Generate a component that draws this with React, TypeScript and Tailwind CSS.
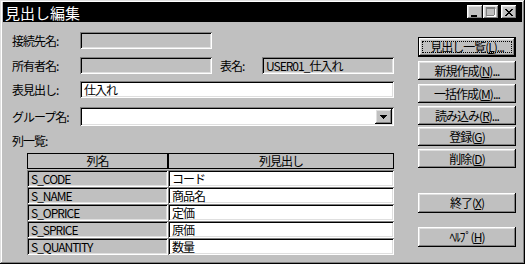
import React from "react";

const RAISED =
  "shadow-[inset_-1px_-1px_#000000,inset_1px_1px_#ffffff,inset_-2px_-2px_#808080,inset_2px_2px_#dfdfdf]";
const SUNKEN =
  "shadow-[inset_1px_1px_#808080,inset_-1px_-1px_#ffffff,inset_2px_2px_#000000,inset_-2px_-2px_#dfdfdf]";

function PixelIcon({ rows, color = "#000" }: { rows: string[]; color?: string }) {
  const rects: React.ReactNode[] = [];
  rows.forEach((r, y) =>
    [...r].forEach((c, x) => {
      if (c === "x")
        rects.push(<rect key={`${x}-${y}`} x={x} y={y} width={1} height={1} fill={color} />);
      if (c === "g")
        rects.push(<rect key={`${x}-${y}`} x={x} y={y} width={1} height={1} fill="#808080" />);
      if (c === "w")
        rects.push(<rect key={`${x}-${y}`} x={x} y={y} width={1} height={1} fill="#ffffff" />);
    })
  );
  return (
    <svg width={rows[0].length} height={rows.length} shapeRendering="crispEdges">
      {rects}
    </svg>
  );
}

const CLOSE_X = [
  "xx....xx",
  ".xx..xx.",
  "..xxxx..",
  "...xx...",
  "..xxxx..",
  ".xx..xx.",
  "xx....xx",
];

const MAX_BOX = [
  "ggggggggg.",
  "ggggggggg.",
  "g.......gw",
  "g.......gw",
  "g.......gw",
  "g.......gw",
  "g.......gw",
  "g.......gw",
  "ggggggggww",
  ".wwwwwwwww",
];

const TRI = ["xxxxxxx", ".xxxxx.", "..xxx..", "...x..."];

function TitleBtn({ children, className = "" }: { children?: React.ReactNode; className?: string }) {
  return (
    <div
      className={`w-[16px] h-[14px] bg-[#c0c0c0] flex items-center justify-center ${RAISED} ${className}`}
    >
      {children}
    </div>
  );
}

function Label({ children, w }: { children: React.ReactNode; w: string }) {
  return <div className={`${w} shrink-0 flex items-center h-full`}>{children}</div>;
}

function Field({
  w,
  white,
  children,
}: {
  w: string;
  white?: boolean;
  children?: React.ReactNode;
}) {
  return (
    <div
      className={`${w} h-full shrink-0 flex items-center pl-[4px] ${
        white ? "bg-white" : "bg-[#c0c0c0]"
      } ${SUNKEN}`}
    >
      {children}
    </div>
  );
}

function Btn({
  children,
  className = "",
  isDefault,
}: {
  children: React.ReactNode;
  className?: string;
  isDefault?: boolean;
}) {
  if (isDefault) {
    return (
      <div className={`w-[98px] border border-black bg-[#c0c0c0] ${className}`}>
        <div className={`w-full h-full p-[3px] ${RAISED}`}>
          <div className="w-full h-full border border-dotted border-black flex items-center justify-center">
            {children}
          </div>
        </div>
      </div>
    );
  }
  return (
    <div
      className={`w-[98px] bg-[#c0c0c0] flex items-center justify-center ${RAISED} ${className}`}
    >
      {children}
    </div>
  );
}

const U = ({ c }: { c: string }) => <span className="underline underline-offset-[1px]">{c}</span>;

const rows = [
  ["S_CODE", "コード"],
  ["S_NAME", "商品名"],
  ["S_OPRICE", "定価"],
  ["S_SPRICE", "原価"],
  ["S_QUANTITY", "数量"],
];

export default function App() {
  return (
    <div
      className={`w-[525px] h-[264px] overflow-hidden bg-[#c0c0c0] p-[2px] text-[12px] leading-none tracking-[-1px] text-black font-['Noto_Sans_CJK_JP','Noto_Sans',sans-serif] shadow-[inset_-1px_-1px_#000000,inset_1px_1px_#dfdfdf,inset_-2px_-2px_#808080,inset_2px_2px_#ffffff]`}
    >
      {/* Title bar */}
      <div className="h-[20px] mx-[1px] bg-black flex items-center justify-between pl-[2px] pr-[5px]">
        <span className="text-white text-[15px] leading-none tracking-normal">見出し編集</span>
        <div className="flex items-center">
          <TitleBtn>
            <div className="w-[6px] h-[2px] bg-black mt-[7px] mr-[2px]" />
          </TitleBtn>
          <TitleBtn>
            <PixelIcon rows={MAX_BOX} />
          </TitleBtn>
          <TitleBtn className="ml-[2px]">
            <PixelIcon rows={CLOSE_X} />
          </TitleBtn>
        </div>
      </div>

      {/* Body */}
      <div className="flex">
        {/* Left */}
        <div className="w-[414px] pl-[10px] flex flex-col">
          <div className="flex h-[17px] mt-[10px]">
            <Label w="w-[68px]">接続先名:</Label>
            <Field w="w-[132px]" />
          </div>
          <div className="flex h-[17px] mt-[8px]">
            <Label w="w-[68px]">所有者名:</Label>
            <Field w="w-[132px]" />
            <Label w="w-[50px] pl-[8px]">表名:</Label>
            <Field w="w-[132px]">USER01_仕入れ</Field>
          </div>
          <div className="flex h-[17px] mt-[7px]">
            <Label w="w-[68px]">表見出し:</Label>
            <Field w="w-[314px]" white>
              仕入れ
            </Field>
          </div>
          <div className="flex h-[19px] mt-[9px]">
            <Label w="w-[68px]">グループ名:</Label>
            <div
              className={`w-[314px] h-full bg-white flex items-center justify-end pr-[2px] ${SUNKEN}`}
            >
              <div className={`w-[17px] h-[15px] bg-[#c0c0c0] flex items-center justify-center ${RAISED}`}>
                <PixelIcon rows={TRI} />
              </div>
            </div>
          </div>
          <div className="h-[13px] mt-[8px] flex items-center">列一覧:</div>
          <div className="ml-[15px] mt-[6px] w-[367px] flex flex-col">
            <div className="flex h-[16px] mb-[1px]">
              <div className="w-[141px] h-full border border-black flex items-center justify-center">
                列名
              </div>
              <div className="w-[226px] h-full border border-black flex items-center justify-center">
                列見出し
              </div>
            </div>
            {rows.map(([a, b]) => (
              <div key={a} className="flex h-[17px]">
                <div className={`w-[141px] h-full flex items-center pl-[4px] bg-[#c0c0c0] ${SUNKEN}`}>
                  {a}
                </div>
                <div className={`w-[226px] h-full flex items-center pl-[4px] bg-white ${SUNKEN}`}>
                  {b}
                </div>
              </div>
            ))}
          </div>
        </div>

        {/* Right buttons */}
        <div className="w-[98px] ml-[2px] flex flex-col">
          <Btn isDefault className="h-[20px] mt-[15px]">
            <span>
              見出し一覧(<U c="L" />)...
            </span>
          </Btn>
          <Btn className="h-[19px] mt-[4px]">
            <span>
              新規作成(<U c="N" />)...
            </span>
          </Btn>
          <Btn className="h-[19px] mt-[4px]">
            <span>
              一括作成(<U c="M" />)...
            </span>
          </Btn>
          <Btn className="h-[19px] mt-[3px]">
            <span>
              読み込み(<U c="R" />)...
            </span>
          </Btn>
          <Btn className="h-[19px] mt-[2px]">
            <span>
              登録(<U c="G" />)
            </span>
          </Btn>
          <Btn className="h-[19px] mt-[3px]">
            <span>
              削除(<U c="D" />)
            </span>
          </Btn>
          <Btn className="h-[20px] mt-[25px]">
            <span>
              終了(<U c="X" />)
            </span>
          </Btn>
          <Btn className="h-[20px] mt-[14px]">
            <span>
              ﾍﾙﾌﾟ(<U c="H" />)
            </span>
          </Btn>
        </div>
      </div>
    </div>
  );
}
